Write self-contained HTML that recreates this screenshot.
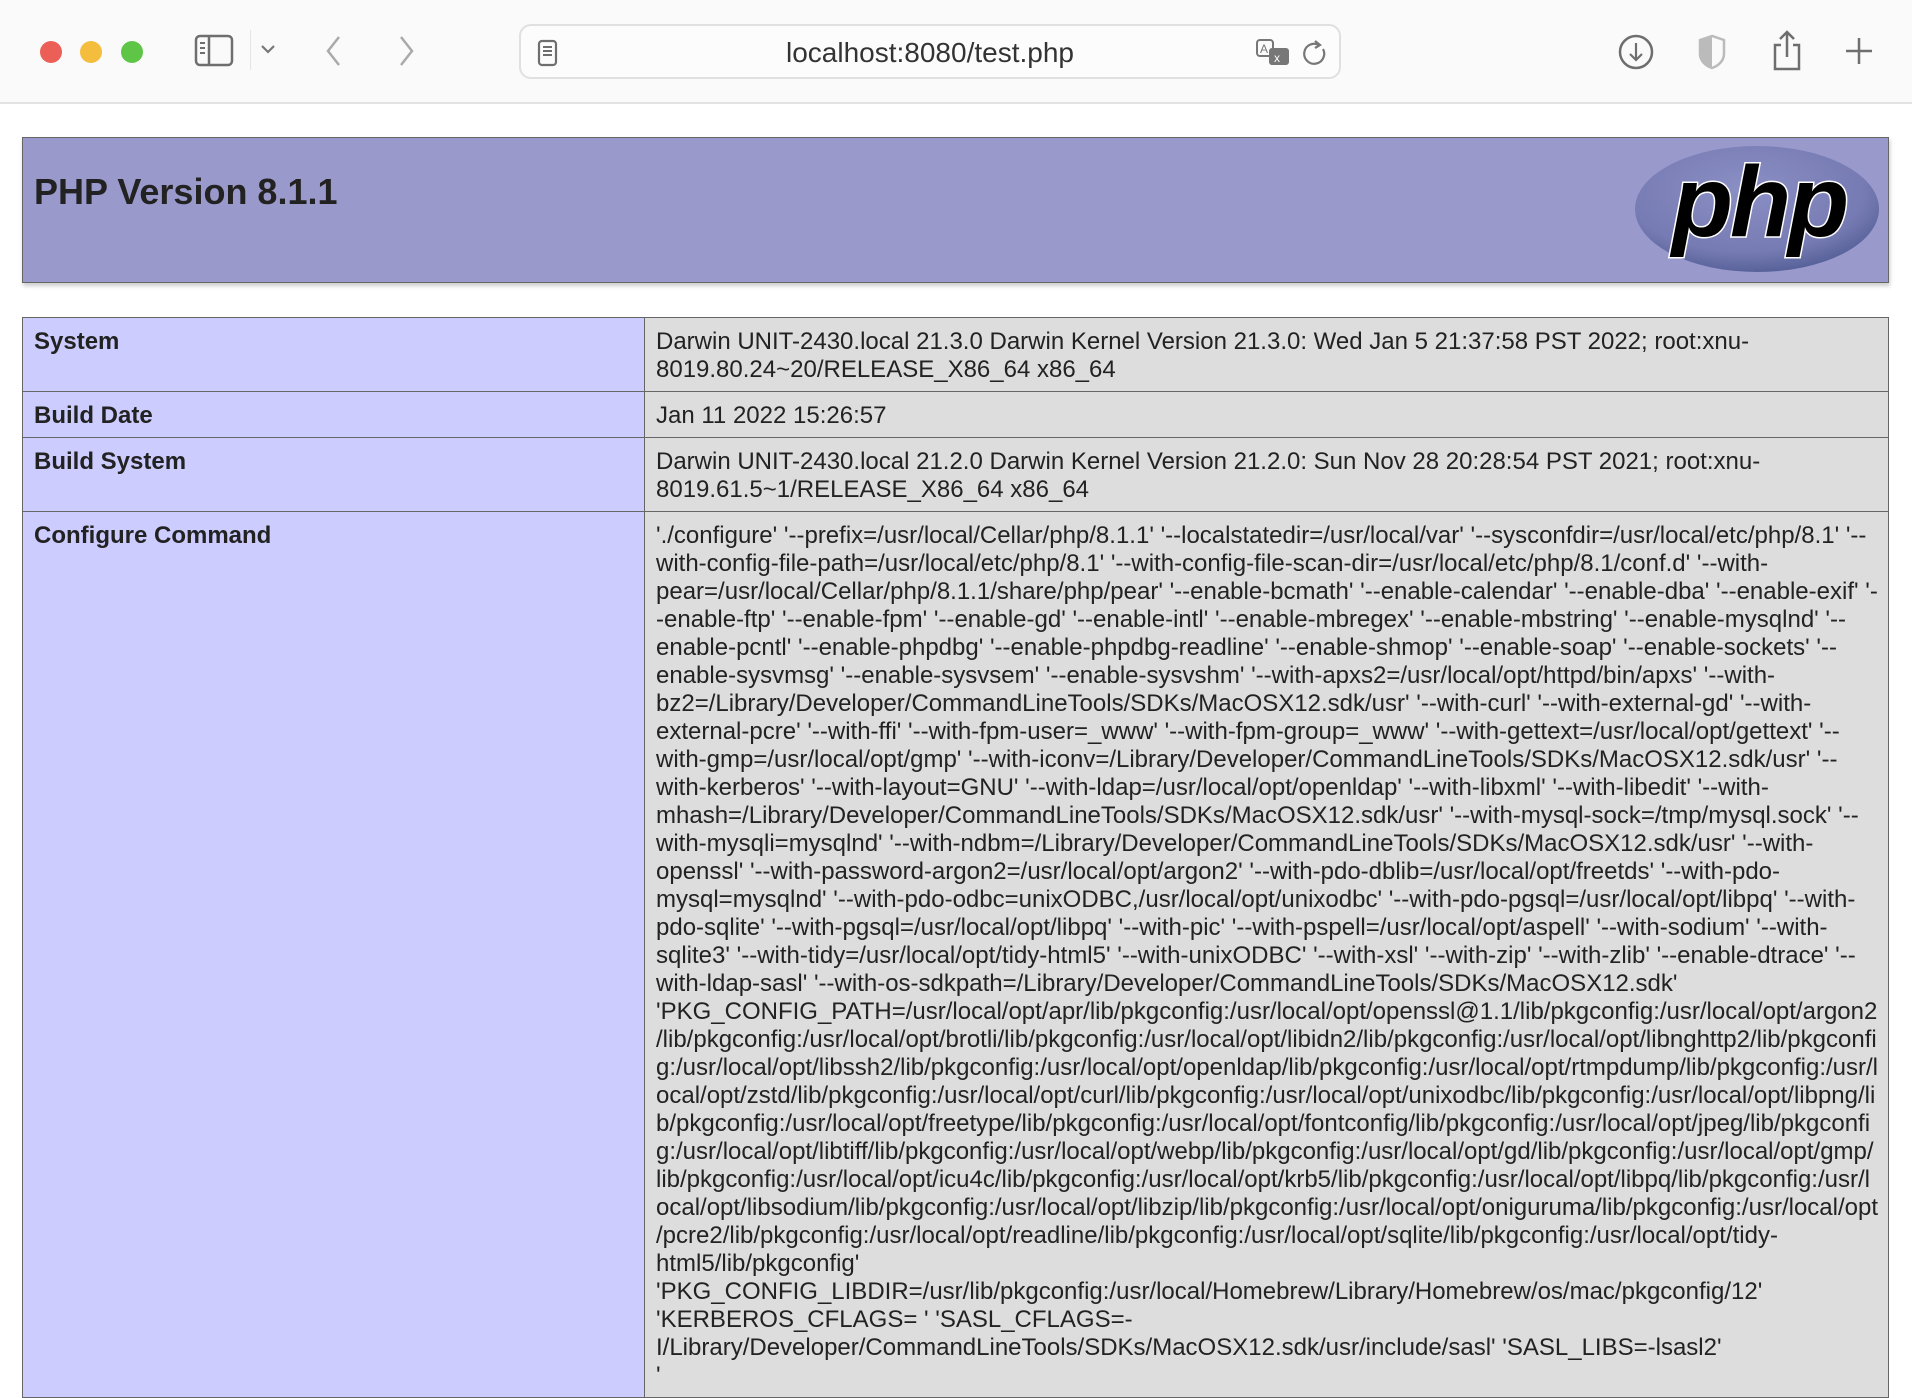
<!DOCTYPE html>
<html><head><meta charset="utf-8"><style>
*{margin:0;padding:0;box-sizing:border-box}
body{width:1912px;height:1340px;overflow:hidden;background:#fff;font-family:"Liberation Sans",Arial,sans-serif;position:relative}
.bar{position:absolute;left:0;top:0;width:1912px;height:104px;background:#fafafa;border-bottom:2px solid #e2e2e2}
.dot{position:absolute;top:41px;width:22px;height:22px;border-radius:50%}
.url{position:absolute;left:519px;top:24px;width:822px;height:55px;border:2px solid #e0e0e0;border-radius:12px;background:#fcfcfc}
.url span{position:absolute;left:0;right:0;top:11px;text-align:center;font-size:28px;color:#333}
.hdr{position:absolute;left:22px;top:137px;width:1867px;height:146px;background:#9999cc;border:1px solid #666;box-shadow:1px 3px 4px #ccc}
.hdr h1{position:absolute;left:11px;top:33px;font-size:36px;font-weight:bold;color:#222}
table{position:absolute;left:22px;top:317px;width:1867px;border-collapse:collapse;font-size:24px;color:#222}
td{border:1px solid #666;vertical-align:top;padding:10px 10px 7px 11px;line-height:28px}
td.e{background:#ccccff;font-weight:bold;width:623px}
td.v{background:#dddddd;white-space:nowrap}
</style></head><body>
<div class="bar">
<div class="dot" style="left:40px;background:#ec5f57"></div>
<div class="dot" style="left:80px;background:#f4bd3e"></div>
<div class="dot" style="left:121px;background:#5ec547"></div>
<svg style="position:absolute;left:194px;top:34px" width="40" height="34" viewBox="0 0 40 34"><rect x="2" y="2" width="36" height="29" rx="4" fill="none" stroke="#6e6e6e" stroke-width="2.5"/><line x1="15" y1="2" x2="15" y2="31" stroke="#6e6e6e" stroke-width="2.5"/><path d="M6 9h5M6 14h5M6 19h5" stroke="#6e6e6e" stroke-width="2"/></svg>
<svg style="position:absolute;left:260px;top:44px" width="16" height="12"><path d="M2 2l6 6 6-6" fill="none" stroke="#777" stroke-width="2.2"/></svg>
<div style="position:absolute;left:250px;top:30px;width:1px;height:40px;background:#e4e4e4"></div>
<svg style="position:absolute;left:324px;top:34px" width="20" height="34"><path d="M15 3L4 17l11 14" fill="none" stroke="#aaa" stroke-width="2.5"/></svg>
<svg style="position:absolute;left:396px;top:34px" width="20" height="34"><path d="M5 3l11 14-11 14" fill="none" stroke="#aaa" stroke-width="2.5"/></svg>
<div class="url"><svg style="position:absolute;left:16px;top:13px" width="22" height="28"><rect x="2" y="2" width="17" height="24" rx="3" fill="none" stroke="#6e6e6e" stroke-width="2.2"/><path d="M6 8h9M6 12h9M6 16h9" stroke="#6e6e6e" stroke-width="2"/></svg><span>localhost:8080/test.php</span>
<svg style="position:absolute;left:734px;top:12px" width="40" height="32"><rect x="2" y="2" width="16" height="16" rx="3" fill="none" stroke="#777" stroke-width="2"/><text x="5" y="15" font-size="12" fill="#777" font-family="Liberation Sans">A</text><rect x="14" y="10" width="20" height="17" rx="3" fill="#777"/><text x="19" y="24" font-size="12" fill="#fff" font-family="Liberation Sans">x</text></svg>
<svg style="position:absolute;left:782px;top:12px" width="26" height="32"><path d="M16 7A10 10 0 1 0 20 11" fill="none" stroke="#777" stroke-width="2.2"/><path d="M12 3l5 4-5 3" fill="none" stroke="#777" stroke-width="2.2"/></svg>
</div>
<svg style="position:absolute;left:1617px;top:33px" width="38" height="38"><circle cx="19" cy="19" r="16" fill="none" stroke="#6e6e6e" stroke-width="2.5"/><path d="M19 10v17M13 21l6 6 6-6" fill="none" stroke="#6e6e6e" stroke-width="2.2"/></svg>
<svg style="position:absolute;left:1696px;top:33px" width="32" height="38"><path d="M16 3L4 7v14c0 7 6 12 12 14 6-2 12-7 12-14V7z" fill="none" stroke="#bbb" stroke-width="2.5"/><path d="M4 7l12-4v32C10 33 4 28 4 21z" fill="#bbb"/></svg>
<svg style="position:absolute;left:1770px;top:29px" width="34" height="44"><path d="M11 16H5v24h24V16h-6" fill="none" stroke="#6e6e6e" stroke-width="2.5"/><path d="M17 28V3M10 10l7-7 7 7" fill="none" stroke="#6e6e6e" stroke-width="2.5"/></svg>
<svg style="position:absolute;left:1844px;top:36px" width="30" height="30"><path d="M15 2v26M2 15h26" stroke="#6e6e6e" stroke-width="2.5"/></svg>
</div>
<div class="hdr"><h1>PHP Version 8.1.1</h1>
<svg style="position:absolute;left:1610px;top:6px" width="250" height="130" viewBox="0 0 250 130"><defs><radialGradient id="g" cx="0.45" cy="0.35" r="0.7"><stop offset="0" stop-color="#8a8fc4"/><stop offset="0.7" stop-color="#777bb3"/><stop offset="1" stop-color="#4f5b93"/></radialGradient></defs><ellipse cx="124" cy="65" rx="122" ry="63" fill="url(#g)"/><text x="126" y="92" text-anchor="middle" font-family="Liberation Sans" font-weight="bold" font-style="italic" font-size="100" fill="#000" stroke="#fff" stroke-width="3" paint-order="stroke" letter-spacing="-3">php</text></svg>
</div>
<table>
<tr><td class="e">System</td><td class="v">Darwin UNIT-2430.local 21.3.0 Darwin Kernel Version 21.3.0: Wed Jan 5 21:37:58 PST 2022; root:xnu-<br>8019.80.24~20/RELEASE_X86_64 x86_64</td></tr>
<tr><td class="e">Build Date</td><td class="v">Jan 11 2022 15:26:57</td></tr>
<tr><td class="e">Build System</td><td class="v">Darwin UNIT-2430.local 21.2.0 Darwin Kernel Version 21.2.0: Sun Nov 28 20:28:54 PST 2021; root:xnu-<br>8019.61.5~1/RELEASE_X86_64 x86_64</td></tr>
<tr><td class="e">Configure Command</td><td class="v">'./configure' '--prefix=/usr/local/Cellar/php/8.1.1' '--localstatedir=/usr/local/var' '--sysconfdir=/usr/local/etc/php/8.1' '--<br>
with-config-file-path=/usr/local/etc/php/8.1' '--with-config-file-scan-dir=/usr/local/etc/php/8.1/conf.d' '--with-<br>
pear=/usr/local/Cellar/php/8.1.1/share/php/pear' '--enable-bcmath' '--enable-calendar' '--enable-dba' '--enable-exif' '-<br>
-enable-ftp' '--enable-fpm' '--enable-gd' '--enable-intl' '--enable-mbregex' '--enable-mbstring' '--enable-mysqlnd' '--<br>
enable-pcntl' '--enable-phpdbg' '--enable-phpdbg-readline' '--enable-shmop' '--enable-soap' '--enable-sockets' '--<br>
enable-sysvmsg' '--enable-sysvsem' '--enable-sysvshm' '--with-apxs2=/usr/local/opt/httpd/bin/apxs' '--with-<br>
bz2=/Library/Developer/CommandLineTools/SDKs/MacOSX12.sdk/usr' '--with-curl' '--with-external-gd' '--with-<br>
external-pcre' '--with-ffi' '--with-fpm-user=_www' '--with-fpm-group=_www' '--with-gettext=/usr/local/opt/gettext' '--<br>
with-gmp=/usr/local/opt/gmp' '--with-iconv=/Library/Developer/CommandLineTools/SDKs/MacOSX12.sdk/usr' '--<br>
with-kerberos' '--with-layout=GNU' '--with-ldap=/usr/local/opt/openldap' '--with-libxml' '--with-libedit' '--with-<br>
mhash=/Library/Developer/CommandLineTools/SDKs/MacOSX12.sdk/usr' '--with-mysql-sock=/tmp/mysql.sock' '--<br>
with-mysqli=mysqlnd' '--with-ndbm=/Library/Developer/CommandLineTools/SDKs/MacOSX12.sdk/usr' '--with-<br>
openssl' '--with-password-argon2=/usr/local/opt/argon2' '--with-pdo-dblib=/usr/local/opt/freetds' '--with-pdo-<br>
mysql=mysqlnd' '--with-pdo-odbc=unixODBC,/usr/local/opt/unixodbc' '--with-pdo-pgsql=/usr/local/opt/libpq' '--with-<br>
pdo-sqlite' '--with-pgsql=/usr/local/opt/libpq' '--with-pic' '--with-pspell=/usr/local/opt/aspell' '--with-sodium' '--with-<br>
sqlite3' '--with-tidy=/usr/local/opt/tidy-html5' '--with-unixODBC' '--with-xsl' '--with-zip' '--with-zlib' '--enable-dtrace' '--<br>
with-ldap-sasl' '--with-os-sdkpath=/Library/Developer/CommandLineTools/SDKs/MacOSX12.sdk'<br>
'PKG_CONFIG_PATH=/usr/local/opt/apr/lib/pkgconfig:/usr/local/opt/openssl@1.1/lib/pkgconfig:/usr/local/opt/argon2<br>
/lib/pkgconfig:/usr/local/opt/brotli/lib/pkgconfig:/usr/local/opt/libidn2/lib/pkgconfig:/usr/local/opt/libnghttp2/lib/pkgconfi<br>
g:/usr/local/opt/libssh2/lib/pkgconfig:/usr/local/opt/openldap/lib/pkgconfig:/usr/local/opt/rtmpdump/lib/pkgconfig:/usr/l<br>
ocal/opt/zstd/lib/pkgconfig:/usr/local/opt/curl/lib/pkgconfig:/usr/local/opt/unixodbc/lib/pkgconfig:/usr/local/opt/libpng/li<br>
b/pkgconfig:/usr/local/opt/freetype/lib/pkgconfig:/usr/local/opt/fontconfig/lib/pkgconfig:/usr/local/opt/jpeg/lib/pkgconfi<br>
g:/usr/local/opt/libtiff/lib/pkgconfig:/usr/local/opt/webp/lib/pkgconfig:/usr/local/opt/gd/lib/pkgconfig:/usr/local/opt/gmp/<br>
lib/pkgconfig:/usr/local/opt/icu4c/lib/pkgconfig:/usr/local/opt/krb5/lib/pkgconfig:/usr/local/opt/libpq/lib/pkgconfig:/usr/l<br>
ocal/opt/libsodium/lib/pkgconfig:/usr/local/opt/libzip/lib/pkgconfig:/usr/local/opt/oniguruma/lib/pkgconfig:/usr/local/opt<br>
/pcre2/lib/pkgconfig:/usr/local/opt/readline/lib/pkgconfig:/usr/local/opt/sqlite/lib/pkgconfig:/usr/local/opt/tidy-<br>
html5/lib/pkgconfig'<br>
'PKG_CONFIG_LIBDIR=/usr/lib/pkgconfig:/usr/local/Homebrew/Library/Homebrew/os/mac/pkgconfig/12'<br>
'KERBEROS_CFLAGS= ' 'SASL_CFLAGS=-<br>
I/Library/Developer/CommandLineTools/SDKs/MacOSX12.sdk/usr/include/sasl' 'SASL_LIBS=-lsasl2'<br>
'</td></tr>
</table>
</body></html>
